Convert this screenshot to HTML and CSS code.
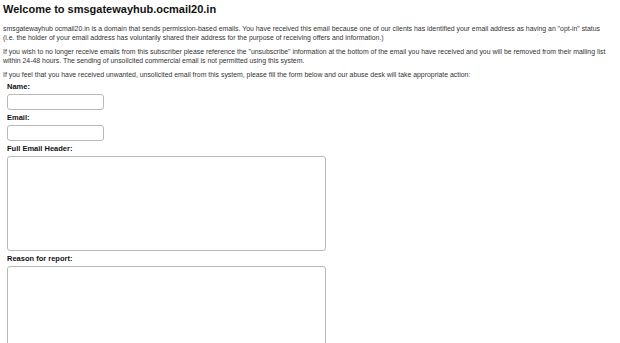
FILE: index.html
```html
<!DOCTYPE html>
<html lang="en">
<head>
    <meta charset="UTF-8">
    <title>Welcome to smsgatewayhub.ocmail20.in</title>
    <link rel="stylesheet" href="styles.css">
</head>
<body>
    <div class="page">
        <h1>Welcome to smsgatewayhub.ocmail20.in</h1>

        <p>smsgatewayhub ocmail20.in is a domain that sends permission-based emails. You have received this email because one of our clients has identified your email address as having an "opt-in" status<br>(i.e. the holder of your email address has voluntarily shared their address for the purpose of receiving offers and information.)</p>

        <p>If you wish to no longer receive emails from this subscriber please reference the "unsubscribe" information at the bottom of the email you have received and you will be removed from their mailing list<br>within 24-48 hours. The sending of unsolicited commercial email is not permitted using this system.</p>

        <p>If you feel that you have received unwanted, unsolicited email from this system, please fill the form below and our abuse desk will take appropriate action:</p>

        <form class="report-form">
            <label for="name">Name:</label>
            <input type="text" id="name" name="name">

            <label for="email">Email:</label>
            <input type="text" id="email" name="email">

            <label for="header">Full Email Header:</label>
            <textarea id="header" name="header"></textarea>

            <label for="reason">Reason for report:</label>
            <textarea id="reason" name="reason"></textarea>
        </form>
    </div>
</body>
</html>
```

FILE: styles.css
```css
body {
    margin: 0;
    padding: 0;
    background: #fff;
    color: #222;
    font-family: "Liberation Sans", Arial, sans-serif;
}
.page {
    padding: 3px 3px 0 3px;
}
h1 {
    font-size: 11px;
    line-height: 13px;
    margin: 0 0 8px 0;
    color: #111;
}
p {
    font-size: 6.9px;
    line-height: 9px;
    margin: 0 0 5px 0;
    color: #333;
}
.report-form {
    display: flex;
    flex-direction: column;
    align-items: flex-start;
    padding-left: 4px;
    margin-top: -2px;
}
label {
    font-size: 7.5px;
    font-weight: bold;
    line-height: 9px;
    margin: 0 0 3px 0;
    color: #111;
}
input[type="text"], textarea {
    box-sizing: border-box;
    border: 1px solid #b8b8b8;
    border-radius: 3px;
    padding: 2px;
    margin: 0 0 3px 0;
    font-family: inherit;
    background: #fff;
    resize: none;
}
input[type="text"] {
    width: 97px;
    height: 16px;
}
textarea {
    width: 319px;
    height: 95px;
}
```
